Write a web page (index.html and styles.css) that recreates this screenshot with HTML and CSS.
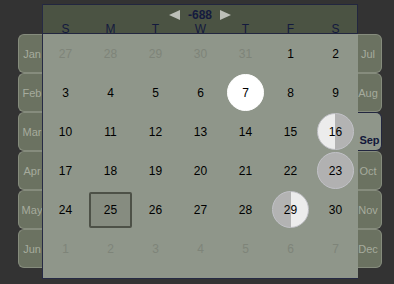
FILE: index.html
```html
<!DOCTYPE html>
<html lang="en">
<head>
    <meta charset="UTF-8">
    <title>Calendar</title>
    <link rel="stylesheet" href="styles.css">
</head>
<body>
    <div class="wrap">
        <div class="tabs tabs-left">
            <div class="tab">Jan</div>
            <div class="tab">Feb</div>
            <div class="tab">Mar</div>
            <div class="tab">Apr</div>
            <div class="tab">May</div>
            <div class="tab">Jun</div>
        </div>
        <div class="panel">
            <div class="header">
                <div class="nav">
                    <span class="arrow arrow-left"></span>
                    <span class="year">-688</span>
                    <span class="arrow arrow-right"></span>
                </div>
                <div class="weekdays">
                    <span>S</span><span>M</span><span>T</span><span>W</span><span>T</span><span>F</span><span>S</span>
                </div>
            </div>
            <div class="days">
                <div class="day other">27</div>
                <div class="day other">28</div>
                <div class="day other">29</div>
                <div class="day other">30</div>
                <div class="day other">31</div>
                <div class="day">1</div>
                <div class="day">2</div>

                <div class="day">3</div>
                <div class="day">4</div>
                <div class="day">5</div>
                <div class="day">6</div>
                <div class="day"><span class="moon full">7</span></div>
                <div class="day">8</div>
                <div class="day">9</div>

                <div class="day">10</div>
                <div class="day">11</div>
                <div class="day">12</div>
                <div class="day">13</div>
                <div class="day">14</div>
                <div class="day">15</div>
                <div class="day"><span class="moon waning">16</span></div>

                <div class="day">17</div>
                <div class="day">18</div>
                <div class="day">19</div>
                <div class="day">20</div>
                <div class="day">21</div>
                <div class="day">22</div>
                <div class="day"><span class="moon new">23</span></div>

                <div class="day">24</div>
                <div class="day today">25</div>
                <div class="day">26</div>
                <div class="day">27</div>
                <div class="day">28</div>
                <div class="day"><span class="moon waxing">29</span></div>
                <div class="day">30</div>

                <div class="day other">1</div>
                <div class="day other">2</div>
                <div class="day other">3</div>
                <div class="day other">4</div>
                <div class="day other">5</div>
                <div class="day other">6</div>
                <div class="day other">7</div>
            </div>
        </div>
        <div class="tabs tabs-right">
            <div class="tab">Jul</div>
            <div class="tab">Aug</div>
            <div class="tab active">Sep</div>
            <div class="tab">Oct</div>
            <div class="tab">Nov</div>
            <div class="tab">Dec</div>
        </div>
    </div>
</body>
</html>
```

FILE: styles.css
```css
body {
    margin: 0;
    background: #333333;
    font-family: 'Liberation Sans', Arial, sans-serif;
    font-size: 11px;
}
.wrap {
    display: flex;
    align-items: flex-start;
    padding: 4px 0 0 18px;
}
.tabs {
    display: flex;
    flex-direction: column;
    width: 24px;
    margin-top: 30px;
}
.tab {
    height: 39px;
    box-sizing: border-box;
    display: flex;
    align-items: center;
    justify-content: center;
    background: #6b7261;
    border: 1px solid #868c7d;
    color: #a6ab9d;
    font-size: 11px;
    overflow: hidden;
    white-space: nowrap;
}
.tabs-left .tab {
    border-right: none;
    border-radius: 6px 0 0 6px;
    padding-left: 3px;
}
.tabs-right .tab {
    border-left: none;
    border-radius: 0 6px 6px 0;
    padding-right: 3px;
}
.tabs-right .tab.active {
    background: #8f968a;
    border: 1px solid #22263f;
    border-left: none;
    color: #12183a;
    font-weight: bold;
    font-size: 11px;
    align-items: flex-end;
    padding: 0 0 4px 0;
    overflow: visible;
}
.panel {
    width: 316px;
    height: 275px;
    box-sizing: border-box;
    border-left: 1px solid #262a44;
    border-bottom: 1px solid #262a44;
    background: #8f968a;
}
.header {
    background: #4b5343;
    border-top: 1px solid #22263f;
    border-right: 1px solid #22263f;
    border-bottom: 1px solid #22263f;
    box-sizing: border-box;
    height: 30px;
}
.nav {
    display: flex;
    justify-content: center;
    align-items: center;
    gap: 8px;
    height: 16px;
    padding-top: 2px;
}
.year {
    color: #141a3e;
    font-weight: bold;
    font-size: 12px;
}
.arrow {
    width: 0;
    height: 0;
    border-top: 5px solid transparent;
    border-bottom: 5px solid transparent;
}
.arrow-left {
    border-right: 11px solid #bcbfb8;
}
.arrow-right {
    border-left: 11px solid #bcbfb8;
}
.weekdays {
    display: grid;
    grid-template-columns: repeat(7, 45px);
    color: #141a3e;
    font-size: 12px;
    line-height: 12px;
    text-align: center;
}
.days {
    display: grid;
    grid-template-columns: repeat(7, 45px);
    grid-auto-rows: 39px;
}
.day {
    display: flex;
    align-items: center;
    justify-content: center;
    color: #000;
    font-size: 12px;
}
.day.other {
    color: #7e8479;
}
.day.today {
    margin: 2px 1px 1px 1px;
    border: 2px solid #4d5147;
    border-radius: 2px;
    background: #868c80;
}
.moon {
    width: 37px;
    height: 37px;
    box-sizing: border-box;
    border-radius: 50%;
    display: flex;
    align-items: center;
    justify-content: center;
    border: 1px solid #c2c2c8;
}
.moon.full {
    background: #ffffff;
    border-color: #ffffff;
}
.moon.waning {
    background: linear-gradient(to right, #ececec 50%, #b3b3b3 50%);
}
.moon.new {
    background: #b1b1b1;
}
.moon.waxing {
    background: linear-gradient(to right, #b3b3b3 50%, #ececec 50%);
}
```
